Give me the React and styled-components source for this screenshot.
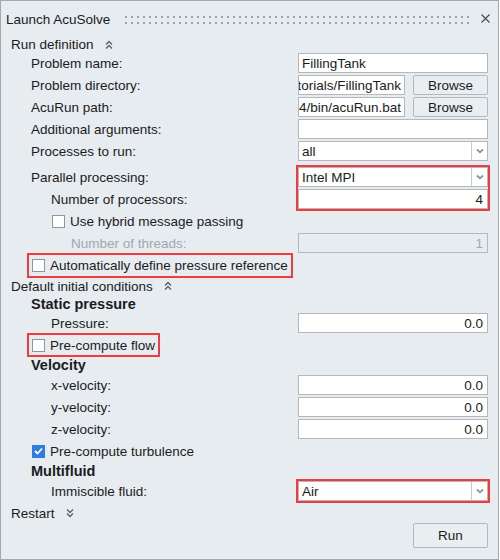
import React from 'react';
import styled, { createGlobalStyle } from 'styled-components';

const GlobalStyle = createGlobalStyle`
  html, body { margin: 0; padding: 0; background: #ffffff; }
  body { font-family: "Liberation Sans", Arial, sans-serif; }
  * { box-sizing: border-box; }
`;

const Window = styled.div`
  width: 499px;
  height: 560px;
  border: 1px solid #a3a8ad;
  background: #e6ecf0;
  color: #1b1b1b;
  font-size: 13.5px;
  display: flex;
  flex-direction: column;
`;

const TitleBar = styled.div`
  height: 36px;
  display: flex;
  align-items: center;
  padding: 0 8px 0 5px;
`;

const Title = styled.span`
  white-space: nowrap;
`;

const Grip = styled.div`
  flex: 1;
  height: 8px;
  margin: 1px 10px 0 15px;
  display: flex;
`;

const CloseButton = styled.button`
  width: 10px;
  height: 10px;
  padding: 0;
  border: 0;
  background: transparent;
  display: flex;
  align-items: center;
  justify-content: center;
  margin-top: -2px;
`;

const Body = styled.div`
  display: flex;
  flex-direction: column;
  padding: 0 10px;
`;

const SectionHeader = styled.div`
  height: ${(p) => p.$h}px;
  margin-top: ${(p) => p.$mt || 0}px;
  display: flex;
  align-items: center;
  gap: 11px;
  white-space: nowrap;
`;

const Row = styled.div`
  height: ${(p) => p.$h || 22}px;
  display: flex;
  align-items: center;
  padding-left: ${(p) => (p.$level || 0) * 20}px;
`;

const Label = styled.span`
  flex: 1;
  white-space: nowrap;
  color: ${(p) => (p.$muted ? '#a3a8ad' : 'inherit')};
`;

const GroupTitle = styled.span`
  font-weight: bold;
  font-size: 14.5px;
  white-space: nowrap;
`;

const Control = styled.div`
  width: 190px;
  display: flex;
  gap: 8px;
`;

const TextInput = styled.input`
  width: 100%;
  height: 20px;
  border: 1px solid #b3b8bd;
  background: ${(p) => (p.disabled ? 'transparent' : '#ffffff')};
  color: ${(p) => (p.disabled ? '#a3a8ad' : '#1b1b1b')};
  font: inherit;
  padding: 0 4px 0 3px;
  text-align: ${(p) => p.$align || 'left'};
  outline: none;
  border-radius: 0;
`;

const ScrolledField = styled.div`
  width: ${(p) => p.$w}px;
  height: 20px;
  border: 1px solid #b3b8bd;
  background: #ffffff;
  overflow: hidden;
  display: flex;
  justify-content: flex-end;
  align-items: center;
  white-space: nowrap;
  padding-right: 3px;
`;

const Button = styled.button`
  width: 75px;
  height: ${(p) => p.$h || 20}px;
  border: 1px solid #b3b8bd;
  border-radius: 2px;
  background: #e9eef1;
  color: #1b1b1b;
  font: inherit;
  padding: 0;
  flex-shrink: 0;
`;

const SelectBox = styled.div`
  width: 100%;
  height: 20px;
  border: 1px solid #b3b8bd;
  background: #ffffff;
  display: flex;
  align-items: stretch;
`;

const SelectValue = styled.span`
  flex: 1;
  display: flex;
  align-items: center;
  padding-left: 3px;
  white-space: nowrap;
`;

const SelectArrow = styled.span`
  width: 16px;
  border-left: 1px solid #c6cacf;
  display: flex;
  align-items: center;
  justify-content: center;
`;

const Highlight = styled.div`
  outline: 2px solid #f03c3f;
  width: ${(p) => (p.$w ? p.$w + 'px' : 'auto')};
`;

const ControlStack = styled(Highlight)`
  width: 190px;
  display: flex;
  flex-direction: column;
  gap: 2px;
`;

const GroupRow = styled.div`
  display: flex;
  margin: 5px 0 1px;
  padding-left: 20px;
`;

const LabelStack = styled.div`
  flex: 1;
  display: flex;
  flex-direction: column;
  gap: 2px;
`;

const StackLabel = styled.span`
  height: 20px;
  display: flex;
  align-items: center;
  padding-left: ${(p) => (p.$indent || 0)}px;
  white-space: nowrap;
`;

const CheckLabel = styled.label`
  display: inline-flex;
  align-items: center;
  gap: 5px;
  height: ${(p) => p.$h || 20}px;
  white-space: nowrap;
  margin-left: ${(p) => (p.$boxed ? -2 : 1)}px;
  padding: ${(p) => (p.$boxed ? '0 3px 0 3px' : '0')};
  outline: ${(p) => (p.$boxed ? '2px solid #f03c3f' : 'none')};
`;

const Box = styled.span`
  width: 13px;
  height: 13px;
  border: 1px solid ${(p) => (p.$checked ? '#2f7de1' : '#8f959b')};
  background: ${(p) => (p.$checked ? '#2f7de1' : '#ffffff')};
  display: inline-flex;
  align-items: center;
  justify-content: center;
  flex-shrink: 0;
`;

const Footer = styled.div`
  display: flex;
  justify-content: flex-end;
  margin-top: 1px;
`;

const ChevronsUp = () => (
  <svg width="8" height="10" viewBox="0 0 8 10" fill="none" stroke="#5b5f63" strokeWidth="1.3">
    <path d="M1 4.5 4 1.5 7 4.5M1 8.5 4 5.5 7 8.5" />
  </svg>
);

const ChevronsDown = () => (
  <svg width="8" height="10" viewBox="0 0 8 10" fill="none" stroke="#5b5f63" strokeWidth="1.3">
    <path d="M1 1.5 4 4.5 7 1.5M1 5.5 4 8.5 7 5.5" />
  </svg>
);

const ArrowDown = () => (
  <svg width="8" height="6" viewBox="0 0 8 6" fill="none" stroke="#8d9297" strokeWidth="1.8">
    <path d="M1 1.5 4 4.3 7 1.5" />
  </svg>
);

const CloseIcon = () => (
  <svg width="9" height="9" viewBox="0 0 9 9" fill="none" stroke="#4a4d50" strokeWidth="1.2">
    <path d="M0.5 0.5 8.5 8.5M8.5 0.5 0.5 8.5" />
  </svg>
);

const Dots = () => (
  <svg width="100%" height="8">
    <defs>
      <pattern id="gripDots" width="6" height="6" patternUnits="userSpaceOnUse">
        <rect width="2" height="2" fill="#9da3a8" />
      </pattern>
    </defs>
    <rect width="100%" height="8" fill="url(#gripDots)" />
  </svg>
);

const Check = ({ checked }) => (
  <Box $checked={checked}>
    {checked && (
      <svg width="9" height="8" viewBox="0 0 9 8" fill="none" stroke="#ffffff" strokeWidth="1.8">
        <path d="M1 4 3.5 6.5 8 1.5" />
      </svg>
    )}
  </Box>
);

const Select = ({ value }) => (
  <SelectBox>
    <SelectValue>{value}</SelectValue>
    <SelectArrow>
      <ArrowDown />
    </SelectArrow>
  </SelectBox>
);

export default function App() {
  return (
    <>
      <GlobalStyle />
      <Window>
        <TitleBar>
          <Title>Launch AcuSolve</Title>
          <Grip>
            <Dots />
          </Grip>
          <CloseButton aria-label="Close">
            <CloseIcon />
          </CloseButton>
        </TitleBar>
        <Body>
          <SectionHeader $h={15}>
            Run definition <ChevronsUp />
          </SectionHeader>
          <Row $level={1}>
            <Label>Problem name:</Label>
            <Control>
              <TextInput defaultValue="FillingTank" />
            </Control>
          </Row>
          <Row $level={1}>
            <Label>Problem directory:</Label>
            <Control>
              <ScrolledField $w={107}>torials/FillingTank</ScrolledField>
              <Button>Browse</Button>
            </Control>
          </Row>
          <Row $level={1}>
            <Label>AcuRun path:</Label>
            <Control>
              <ScrolledField $w={107}>64/bin/acuRun.bat</ScrolledField>
              <Button>Browse</Button>
            </Control>
          </Row>
          <Row $level={1}>
            <Label>Additional arguments:</Label>
            <Control>
              <TextInput defaultValue="" />
            </Control>
          </Row>
          <Row $level={1}>
            <Label>Processes to run:</Label>
            <Control>
              <Select value="all" />
            </Control>
          </Row>
          <GroupRow>
            <LabelStack>
              <StackLabel>Parallel processing:</StackLabel>
              <StackLabel $indent={20}>Number of processors:</StackLabel>
            </LabelStack>
            <ControlStack>
              <Select value="Intel MPI" />
              <TextInput $align="right" defaultValue="4" />
            </ControlStack>
          </GroupRow>
          <Row $level={2}>
            <CheckLabel>
              <Check />
              Use hybrid message passing
            </CheckLabel>
          </Row>
          <Row $level={3}>
            <Label $muted>Number of threads:</Label>
            <Control>
              <TextInput $align="right" defaultValue="1" disabled />
            </Control>
          </Row>
          <Row $level={1} $h={23}>
            <CheckLabel $boxed $h={21}>
              <Check />
              Automatically define pressure reference
            </CheckLabel>
          </Row>
          <SectionHeader $h={18}>
            Default initial conditions <ChevronsUp />
          </SectionHeader>
          <Row $level={1} $h={17}>
            <GroupTitle>Static pressure</GroupTitle>
          </Row>
          <Row $level={2}>
            <Label>Pressure:</Label>
            <Control>
              <TextInput $align="right" defaultValue="0.0" />
            </Control>
          </Row>
          <Row $level={1}>
            <CheckLabel $boxed>
              <Check />
              Pre-compute flow
            </CheckLabel>
          </Row>
          <Row $level={1} $h={18}>
            <GroupTitle>Velocity</GroupTitle>
          </Row>
          <Row $level={2}>
            <Label>x-velocity:</Label>
            <Control>
              <TextInput $align="right" defaultValue="0.0" />
            </Control>
          </Row>
          <Row $level={2}>
            <Label>y-velocity:</Label>
            <Control>
              <TextInput $align="right" defaultValue="0.0" />
            </Control>
          </Row>
          <Row $level={2}>
            <Label>z-velocity:</Label>
            <Control>
              <TextInput $align="right" defaultValue="0.0" />
            </Control>
          </Row>
          <Row $level={1}>
            <CheckLabel>
              <Check checked />
              Pre-compute turbulence
            </CheckLabel>
          </Row>
          <Row $level={1} $h={18}>
            <GroupTitle>Multifluid</GroupTitle>
          </Row>
          <Row $level={2}>
            <Label>Immiscible fluid:</Label>
            <Highlight $w={190}>
              <Select value="Air" />
            </Highlight>
          </Row>
          <SectionHeader $h={18} $mt={2}>
            Restart <ChevronsDown />
          </SectionHeader>
          <Footer>
            <Button $h={25}>Run</Button>
          </Footer>
        </Body>
      </Window>
    </>
  );
}
